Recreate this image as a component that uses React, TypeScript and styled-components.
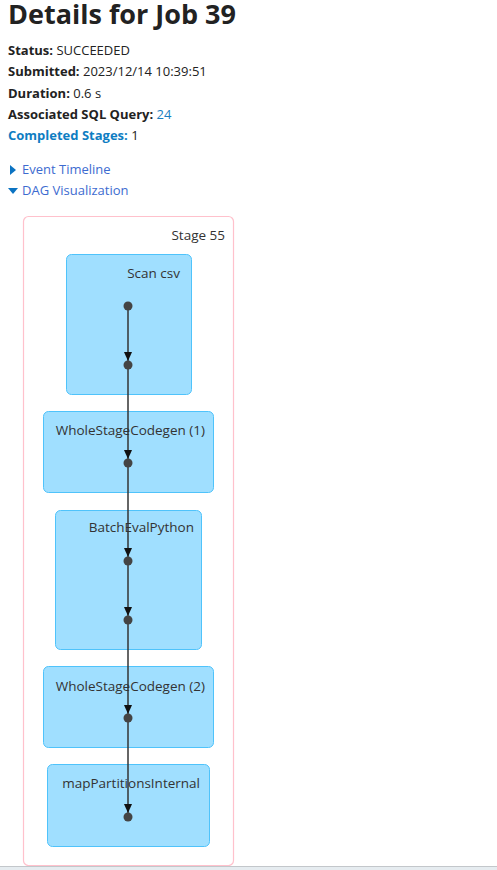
import styled, { createGlobalStyle } from "styled-components"

const GlobalStyle = createGlobalStyle`
  html, body {
    margin: 0;
    padding: 0;
    background: #fff;
  }
  body {
    font-family: "Open Sans", "Noto Sans", sans-serif;
    color: #222;
  }
`

const Page = styled.div`
  padding: 0 8px;
`

const Title = styled.h3`
  margin: 0 0 12px;
  font-size: 27px;
  line-height: 28px;
  font-weight: 700;
  color: #222;
`

const InfoList = styled.ul`
  list-style: none;
  margin: 0;
  padding: 0;
  font-size: 13px;
  line-height: 21.25px;
`

const Label = styled.strong<{ $link?: boolean }>`
  font-weight: 700;
  color: ${(p) => (p.$link ? "#0e7dc2" : "#222")};
`

const Link = styled.a`
  color: #1a7fc2;
  text-decoration: none;
`

const Expanders = styled.div`
  margin-top: 13px;
  display: flex;
  flex-direction: column;
`

const ExpandRow = styled.a`
  display: flex;
  align-items: center;
  gap: 4px;
  font-size: 13px;
  line-height: 21px;
  color: #3d6bd0;
  text-decoration: none;
`

const Arrow = styled.span<{ $open?: boolean }>`
  display: inline-block;
  width: 0;
  height: 0;
  ${(p) =>
    p.$open
      ? `border-left: 5px solid transparent; border-right: 5px solid transparent; border-top: 6px solid #0b73c2; margin-top: 1px;`
      : `border-top: 5px solid transparent; border-bottom: 5px solid transparent; border-left: 6px solid #0b73c2; margin-left: 2px; margin-right: 2px;`}
`

const Diagram = styled.svg`
  display: block;
  margin: 12px 0 0 12px;
  font-family: "Open Sans", "Noto Sans", sans-serif;
`

const Footer = styled.div`
  border-top: 1px solid #c3c7cb;
  background: #e6ecf0;
  height: 3px;
`

type Node = { x: number; y: number; w: number; h: number; label: string; ty: number; tx: number }

const nodes: Node[] = [
  { x: 46.5, y: 41.5, w: 125, h: 140, label: "Scan csv", tx: 160, ty: 65 },
  { x: 23.5, y: 198.5, w: 170, h: 81, label: "WholeStageCodegen (1)", tx: 185, ty: 222 },
  { x: 35.5, y: 297.5, w: 146, h: 139, label: "BatchEvalPython", tx: 174, ty: 319 },
  { x: 23.5, y: 453.5, w: 170, h: 81, label: "WholeStageCodegen (2)", tx: 185, ty: 478 },
  { x: 27.5, y: 551.5, w: 162, h: 82, label: "mapPartitionsInternal", tx: 180, ty: 575 },
]

const dots = [93, 152, 250, 348, 407, 505, 604]
const lineX = 108

function DagViz() {
  return (
    <Diagram width={216} height={653} viewBox="0 0 216 653">
      <rect x={3.5} y={3.5} width={210} height={649} rx={5} fill="#fff" stroke="#ffc1cc" strokeWidth={1.2} />
      <text x={205} y={27} textAnchor="end" fontSize={13.5} fill="#333">
        Stage 55
      </text>
      {nodes.map((n) => (
        <g key={n.label}>
          <rect x={n.x} y={n.y} width={n.w} height={n.h} rx={5} fill="#a0dfff" stroke="#4fc3fb" strokeWidth={1} />
          <text x={n.tx} y={n.ty} textAnchor="end" fontSize={13.5} fill="#333">
            {n.label}
          </text>
        </g>
      ))}
      <line x1={lineX} y1={dots[0]} x2={lineX} y2={dots[dots.length - 1]} stroke="#333" strokeWidth={1.5} />
      {dots.slice(1).map((d) => (
        <path key={`a${d}`} d={`M${lineX - 4} ${d - 13} L${lineX + 4} ${d - 13} L${lineX} ${d - 4} Z`} fill="#111" />
      ))}
      {dots.map((d) => (
        <circle key={d} cx={lineX} cy={d} r={4.5} fill="#444" />
      ))}
    </Diagram>
  )
}

export default function App() {
  return (
    <>
      <GlobalStyle />
      <Page>
        <Title>Details for Job 39</Title>
        <InfoList>
          <li>
            <Label>Status:</Label> SUCCEEDED
          </li>
          <li>
            <Label>Submitted:</Label> 2023/12/14 10:39:51
          </li>
          <li>
            <Label>Duration:</Label> 0.6 s
          </li>
          <li>
            <Label>Associated SQL Query:</Label> <Link href="#">24</Link>
          </li>
          <li>
            <Link href="#">
              <Label $link>Completed Stages:</Label>
            </Link>{" "}
            1
          </li>
        </InfoList>
        <Expanders>
          <ExpandRow href="#">
            <Arrow />
            Event Timeline
          </ExpandRow>
          <ExpandRow href="#">
            <Arrow $open />
            DAG Visualization
          </ExpandRow>
        </Expanders>
        <DagViz />
      </Page>
      <Footer />
    </>
  )
}
